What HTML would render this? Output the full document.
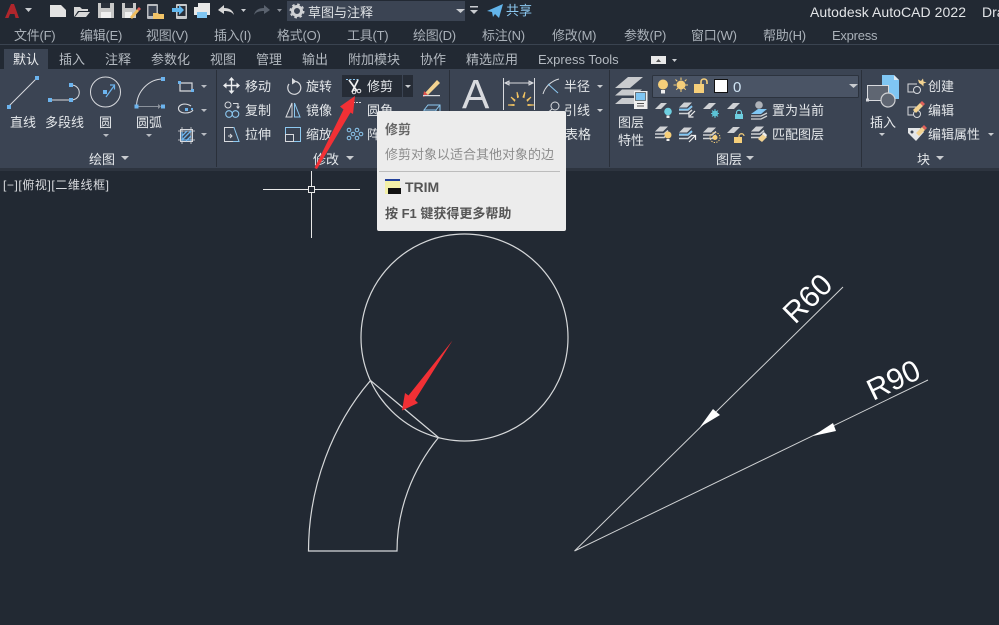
<!DOCTYPE html>
<html><head><meta charset="utf-8"><style>
html,body{margin:0;padding:0;background:#222933;width:999px;height:625px;overflow:hidden}
svg{display:block}
text{font-family:"Liberation Sans","Noto Sans CJK SC",sans-serif;font-size:13px}
.m text{fill:#aab1b9;letter-spacing:-.25px}.t text{fill:#b4bac1}.r text{fill:#e4e7ea}
</style></head><body>
<svg width="999" height="625" viewBox="0 0 999 625" xmlns="http://www.w3.org/2000/svg">
<defs>
<g id="stk" fill="none" stroke="#cfd1d4" stroke-width="1.500"><path d="M0 5.500L5 .5H13L8 5.500Z" fill="#cfd1d4" stroke="none"/><path d="M0 8h9l4-3.500M0 11.500h9l4-3.500"/></g>
</defs>
<rect width="999" height="625" fill="#222933"/>
<rect y="44" width="999" height="1" fill="#3a4350"/>
<rect y="69" width="999" height="99" fill="#3b4453"/>
<rect y="168" width="999" height="3" fill="#2d343f"/>
<rect x="4" y="49" width="44" height="20" fill="#3b4453"/>
<g fill="#2a303a"><rect x="216" y="70" width="1" height="97"/><rect x="449" y="70" width="1" height="97"/><rect x="609" y="70" width="1" height="97"/><rect x="861" y="70" width="1" height="97"/></g>

<!-- QAT -->
<path d="M5 18L11 4H14L19 18H15.500L14.500 14H10L8.500 18Z" fill="#b0262c"/>
<path d="M25 8h7l-3.500 4z" fill="#c9ccd0"/>
<path d="M50 5h11l5 5v7H50z" fill="#e3e3e3"/>
<path d="M74 7h6l2 2h6v2H78l-4 6zM79 12h11l-4 5H75z" fill="#d8d8d8"/>
<path d="M98 3h16v15H98z" fill="#c8c8c8"/><rect x="101" y="3" width="9" height="5" fill="#2a303a"/><rect x="101" y="12" width="10" height="6" fill="#f0f0f0"/>
<path d="M122 3h14v15h-14z" fill="#c8c8c8"/><rect x="125" y="3" width="8" height="5" fill="#2a303a"/><rect x="125" y="12" width="7" height="6" fill="#f0f0f0"/><path d="M130 17l7-8 2 2-7 8z" fill="#f0bd5f"/><path d="M137 9l2-2 2 2-2 2z" fill="#e0605a"/>
<rect x="147" y="4" width="11" height="15" rx="1" fill="#b9bcc0"/><rect x="148.500" y="6" width="8" height="10" fill="#3b4453"/><path d="M153 13h5l1 1h5v5h-11z" fill="#f2c468"/>
<rect x="176" y="4" width="11" height="15" rx="1" fill="#c8cacc"/><rect x="177.500" y="6" width="8" height="10" fill="#2a303a"/><path d="M172 8h7V5l5 5-5 5v-3h-7z" fill="#62b8ef"/>
<path d="M198 3h12v5h-12z" fill="#e8e8e8"/><path d="M194 7h16v8h-16z" fill="#e8e8e8"/><rect x="197" y="12" width="10" height="6" fill="#7fc6f3"/>
<path d="M218 10l6-5v3c5 0 9 2 10 7-2-3-5-4-10-4v3z" fill="#d8d8d8"/><path d="M241 9h5l-2.500 3z" fill="#c9ccd0"/>
<path d="M270 10l-6-5v3c-5 0-9 2-10 7 2-3 5-4 10-4v3z" fill="#5a626e"/><path d="M277 9h5l-2.500 3z" fill="#8b9098"/>
<rect x="287" y="1" width="178" height="20" fill="#3b4453"/>
<circle cx="297" cy="11" r="4.500" fill="none" stroke="#d0d2d5" stroke-width="3"/><circle cx="297" cy="11" r="6.500" fill="none" stroke="#d0d2d5" stroke-width="2" stroke-dasharray="2.500 2.600"/>
<text x="308" y="17" fill="#dfe2e5">草图与注释</text>
<path d="M456 9h9l-4.500 4z" fill="#c9ccd0"/>
<rect x="470" y="6" width="8" height="1.500" fill="#c9ccd0"/><path d="M470 10h8l-4 4z" fill="#c9ccd0"/>
<path d="M487 11L503 4l-4 14-4-4-2 3-1-5z" fill="#62b4ea"/>
<text x="506" y="15" fill="#8cc8f0">共享</text>
<text x="810" y="17" fill="#e2e4e7" style="font-size:14px" textLength="156">Autodesk AutoCAD 2022</text>
<text x="982" y="17" fill="#e2e4e7" style="font-size:14px">Dra</text>

<g class="m">
<text x="14" y="40">文件(F)</text><text x="80" y="40">编辑(E)</text><text x="146" y="40">视图(V)</text><text x="214" y="40">插入(I)</text><text x="277" y="40">格式(O)</text><text x="347" y="40">工具(T)</text><text x="413" y="40">绘图(D)</text><text x="482" y="40">标注(N)</text><text x="552" y="40">修改(M)</text><text x="624" y="40">参数(P)</text><text x="691" y="40">窗口(W)</text><text x="763" y="40">帮助(H)</text><text x="832" y="40">Express</text>
</g>
<g class="t">
<text x="13" y="64" style="fill:#eceef0">默认</text><text x="59" y="64">插入</text><text x="105" y="64">注释</text><text x="151" y="64">参数化</text><text x="210" y="64">视图</text><text x="256" y="64">管理</text><text x="302" y="64">输出</text><text x="348" y="64">附加模块</text><text x="420" y="64">协作</text><text x="466" y="64">精选应用</text><text x="538" y="64">Express Tools</text>
</g>
<rect x="651" y="56" width="15" height="8" fill="#e8e8e8"/><path d="M656 62h5l-2.500-3z" fill="#555"/><path d="M672 59h5l-2.500 3z" fill="#c9ccd0"/>

<!-- draw panel icons -->
<g fill="none" stroke="#d8dade" stroke-width="1">
<path d="M8 107L37 78"/>
<path d="M50 100H70M71 85c11 0 11 15 0 15"/>
<circle cx="105.500" cy="92" r="15"/>
<path d="M136.500 106C137 91 149 79 163 79"/>
<path d="M137 106.500H160" stroke="#8b929c"/>
<path d="M180 83h12v8h-12z" stroke-width="1.200"/>
<path d="M191 106c-3-2-5-2-7-2-8 1-7 9 1 9 4 0 7-1 8-3" stroke-width="1.100"/>
<rect x="180.500" y="129.500" width="12" height="12"/>
<path d="M178 131h17M178 140h17M182 127v17M191 127v17" stroke-width=".8"/>
</g>
<path d="M182 140l9-9M182 136l5-5M186 141l5-5M182 132v8h9" stroke="#6cb4ee" stroke-width="1.300" fill="none"/>
<path d="M106 97L114 86M110 85h4.500v4.500" stroke="#6cb4ee" fill="none" stroke-width="1.200"/>
<g fill="#6cb4ee"><rect x="35" y="76" width="4" height="4"/><rect x="7" y="105" width="4" height="4"/><rect x="69" y="83" width="4" height="4"/><rect x="69" y="98" width="4" height="4"/><rect x="48" y="98" width="4" height="4"/><rect x="103" y="90" width="4" height="4"/><rect x="161" y="77" width="4" height="4"/><rect x="134.500" y="104.500" width="4" height="4"/><rect x="161" y="104.500" width="4" height="4"/><rect x="178" y="81" width="3" height="3"/><rect x="191" y="89" width="3" height="3"/><rect x="185" y="108" width="3" height="3"/><rect x="191" y="108" width="2" height="2"/></g>
<path d="M158 104l3 2.500-3 2.500z" fill="#8b929c"/>
<g fill="#b8bcc2"><path d="M201 85h6l-3 3zM201 109h6l-3 3zM201 133h6l-3 3zM103 134h6l-3 3zM146 134h6l-3 3z"/></g>
<g class="r">
<text x="10" y="127">直线</text><text x="45" y="127">多段线</text><text x="99" y="127">圆</text><text x="136" y="127">圆弧</text>
<text x="89" y="164">绘图</text>
<text x="245" y="91">移动</text><text x="245" y="115">复制</text><text x="245" y="139">拉伸</text>
<text x="306" y="91">旋转</text><text x="306" y="115">镜像</text><text x="306" y="139">缩放</text>
</g>
<path d="M121 156h8l-4 4z" fill="#c9ccd0"/><path d="M346 156h8l-4 4z" fill="#c9ccd0"/><path d="M746 156h8l-4 4z" fill="#c9ccd0"/><path d="M936 156h8l-4 4z" fill="#c9ccd0"/>

<!-- modify -->
<path d="M231.500 79v13M225 85.500h13" stroke="#eceef0" stroke-width="1.400" fill="none"/><path d="M231.500 77l-3 3.500h6zM231.500 94l-3-3.500h6zM223 85.500l3.500-3v6zM240 85.500l-3.500-3v6z" fill="#eceef0"/>
<path d="M296 81.500a6.500 6.500 0 1 1-7 2.500" fill="none" stroke="#d8dade" stroke-width="1.200"/><path d="M292 78l4.500 3.500-4.500 3z" fill="#d8dade"/>
<g fill="none" stroke="#d8dade" stroke-width="1"><circle cx="228" cy="105" r="3"/><path d="M233 103.500h5v4"/></g><path d="M236 106.500l2 2.500 2-2.500z" fill="#d8dade"/><g fill="none" stroke="#8cc8f0" stroke-width="1.100"><circle cx="229" cy="114" r="3.300"/><circle cx="235.500" cy="114" r="3.300"/></g>
<path d="M292 103L286 117H292Z" fill="none" stroke="#d8dade"/><path d="M294.500 103V117H300Z" fill="none" stroke="#8cc8f0"/>
<path d="M233 127.500h-8.500v14h8.500" fill="none" stroke="#d8dade"/><path d="M233 127.500h1l5 14h-6" fill="none" stroke="#8cc8f0"/><path d="M228 136h4M230 134l2 2-2 2" stroke="#d8dade" fill="none"/>
<rect x="285.500" y="127.500" width="15" height="14" fill="none" stroke="#8cc8f0"/><rect x="285.500" y="134.500" width="8" height="7" fill="#3b4453" stroke="#d8dade"/>

<!-- trim -->
<rect x="342" y="75" width="60" height="22" fill="#262c36"/><rect x="403" y="75" width="10" height="22" fill="#262c36"/>
<path d="M346 79.500h13" stroke="#8cc8f0" stroke-dasharray="2 1.500"/>
<path d="M349 80l8 11M358 80l-6 12" stroke="#f2f2f2" stroke-width="1.700"/><circle cx="354" cy="92" r="1.800" fill="none" stroke="#eee"/><circle cx="359" cy="91" r="1.800" fill="none" stroke="#eee"/>
<text x="367" y="91" fill="#e4e7ea">修剪</text>
<text x="367" y="115" fill="#e4e7ea">圆角</text>
<text x="367" y="139" fill="#e4e7ea">阵列</text>
<path d="M405 85h6l-3 3z" fill="#c9ccd0"/>
<path d="M353 102.500h9" fill="none" stroke="#d8dade" stroke-dasharray="2 1"/>
<g fill="none" stroke="#8cc8f0"><circle cx="349" cy="130" r="1.800"/><circle cx="357" cy="130" r="1.800"/><circle cx="349" cy="138" r="1.800"/><circle cx="357" cy="138" r="1.800"/><circle cx="353" cy="134" r="1.800"/><circle cx="361" cy="134" r="1.800"/></g>
<text x="313" y="164" fill="#e4e7ea">修改</text>
<path d="M424 94l13-14 3 3-12 12z" fill="#f3d391"/><path d="M424 91l4 4-5 2z" fill="#e0514d"/><rect x="423" y="95" width="17" height="1.200" fill="#d8dade"/>
<path d="M424 110l4-5h12v9l-3 3h-13z" fill="none" stroke="#8cc8f0"/><path d="M424 110h12v7M436 110l4-5" fill="none" stroke="#8cc8f0"/>

<!-- annotation -->
<text x="462" y="108" style="font-size:41px" fill="#d8dade">A</text>
<path d="M503.500 78v32M534.500 78v32M505 83h28M505 83l4-2v4zM533 83l-4-2v4z" stroke="#d8dade" fill="none"/>
<path d="M517 92l1.500 5-1 .5zM525 92l-2 5 1 .5zM511 97l4 3-.5 1zM531 97l-4 3 .5 1zM508 105l6-.5v1zM534 105l-6-.5v1z" fill="#f3c462" stroke="#f3c462"/>
<path d="M543 94c2-7 8-13 16-15" fill="none" stroke="#d8dade"/>
<path d="M548 84l10 9" stroke="#8cc8f0"/>
<circle cx="555" cy="106" r="4" fill="none" stroke="#d8dade"/><path d="M552 109l-7 6v5" fill="none" stroke="#d8dade"/>
<text x="564" y="91" fill="#e4e7ea">半径</text><text x="564" y="115" fill="#e4e7ea">引线</text><text x="565" y="139" fill="#e4e7ea">表格</text>
<path d="M597 85h6l-3 3zM597 109h6l-3 3z" fill="#c9ccd0"/>

<!-- layers -->
<path d="M615 88l13-11h15l-13 11z" fill="#c9cbce"/>
<path d="M615 95.500l7-6h20l-3 2.500-4 3.500z" fill="#c9cbce"/>
<path d="M615 104l7-6h12v6z" fill="#c9cbce"/>
<rect x="634" y="91" width="13.500" height="18" fill="#efefef"/>
<rect x="635.500" y="92.500" width="10" height="8" fill="#7fc6f3" stroke="#333" stroke-width=".6"/><path d="M637 103.500h7M644 106h-7" stroke="#555"/>
<rect x="652.500" y="75.500" width="206" height="22" rx="1" fill="#4a5465" stroke="#2c333e"/>
<circle cx="663" cy="84.500" r="5" fill="#f6cf7a"/><rect x="661" y="90" width="4" height="3.500" fill="#eee"/>
<circle cx="681" cy="85" r="4.500" fill="#f6cf7a"/><path d="M681 77.500v15M673.500 85h15M675.500 79.500l11 11M686.500 79.500l-11 11" stroke="#f6cf7a" stroke-dasharray="2.500 6 6"/>
<rect x="694" y="84" width="10" height="9" fill="#f6cf7a"/><path d="M701 84v-2c0-4 6-4 6 0v2" fill="none" stroke="#f6cf7a" stroke-width="1.600"/>
<rect x="714.500" y="79.500" width="13" height="13" fill="#fff" stroke="#111"/>
<text x="733" y="92" fill="#cfe3f3" style="font-size:15px">0</text>
<path d="M849 84h9l-4.500 4z" fill="#c9ccd0"/>
<!-- row 1 -->
<g fill="#cfd1d4"><path d="M655 109l6-6h6l-6 6z"/><path d="M703 109l6-6h7l-6 6z"/><path d="M727 109l6-6h7l-6 6z"/></g>
<circle cx="668" cy="111.500" r="3.800" fill="#6ecfe0"/><rect x="666.500" y="115.500" width="3" height="2.500" fill="#eee"/>
<use href="#stk" x="679" y="102"/><path d="M679 109.500h9l4-3.500" stroke="#7fc6f3" stroke-width="1.800" fill="none"/>
<path d="M695 111l-5 5M689 112.500v4.500h4.500" stroke="#eee" stroke-width="1.200" fill="none"/>
<circle cx="715" cy="113.500" r="3" fill="#5cc3d6"/><path d="M715 109v9M711 113.500h8M712 110.500l6 6M718 110.500l-6 6" stroke="#5cc3d6"/>
<rect x="735" y="114" width="8" height="5" fill="#6ecfe0"/><path d="M736.500 114v-1.500c0-3 5-3 5 0v1.500" fill="none" stroke="#6ecfe0" stroke-width="1.200"/>
<circle cx="759" cy="105" r="3.800" fill="#aeb2b8"/><path d="M751 114l7-5h9l-6 5z" fill="#7fc6f3"/><path d="M751 116h10l6-3M751 119h10l6-3" stroke="#cfd1d4" fill="none" stroke-width="1.300"/>
<!-- row 2 -->
<use href="#stk" x="655" y="126"/>
<circle cx="668" cy="135" r="3.500" fill="#f6cf7a"/><rect x="666.500" y="139" width="3" height="2" fill="#eee"/>
<use href="#stk" x="679" y="127"/><path d="M679 134.500h9l4-3.500" stroke="#7fc6f3" stroke-width="1.800" fill="none"/>
<path d="M689 142l6-6M691 135.500h4.500v4.500" stroke="#eee" stroke-width="1.200" fill="none"/>
<use href="#stk" x="703" y="127"/>
<circle cx="715" cy="137.500" r="2.500" fill="#f6cf7a"/><circle cx="715" cy="137.500" r="5" fill="none" stroke="#f6cf7a" stroke-dasharray="1.300 1.300"/>
<path d="M727 133l6-6h7l-6 6z" fill="#cfd1d4"/>
<rect x="734" y="137" width="8" height="6" fill="#f6cf7a"/><path d="M739 137v-1c0-3 5-3 5 0" fill="none" stroke="#f6cf7a" stroke-width="1.200"/>
<use href="#stk" x="751" y="126"/>
<path d="M758 139l5-5 4 3-5 5z" fill="#f3d391"/><path d="M762 134l2-2 3 3-1 2z" fill="#eee"/>
<g class="r"><text x="772" y="115">置为当前</text><text x="772" y="139">匹配图层</text><text x="618" y="127">图层</text><text x="618" y="145">特性</text><text x="716" y="164">图层</text>
<text x="870" y="127">插入</text><text x="928" y="91">创建</text><text x="928" y="115">编辑</text><text x="928" y="139">编辑属性</text><text x="917" y="164">块</text></g>

<!-- block -->
<path d="M882 75h12l5 5v19h-17z" fill="#7fc6f3"/><path d="M894 75l5 5h-5z" fill="#dfe8ef"/>
<rect x="867.500" y="85.500" width="21" height="15" fill="#5f6672" stroke="#d8dade"/><circle cx="888" cy="100" r="7" fill="#5f6672" stroke="#cfd1d4" stroke-width="1.200"/><rect x="866" y="98.500" width="3" height="3" fill="#d8dade"/>
<path d="M879 133h6l-3 3z" fill="#c9ccd0"/>
<path d="M917 84h-9v8h9" fill="none" stroke="#d8dade"/><circle cx="917" cy="90" r="3.500" fill="#3b4453" stroke="#d8dade"/><path d="M919 83l-1-3.500 3 1.500 2-2.500 .5 3 3 1-3 1v3l-2-2z" fill="#f3d391"/>
<path d="M917 107h-9v8h9" fill="none" stroke="#d8dade"/><circle cx="917" cy="114" r="3.500" fill="#3b4453" stroke="#d8dade"/><path d="M913 110l7-7 3 3-7 7z" fill="#f3d391"/><path d="M920 103l2-2 3 3-2 2z" fill="#e0605a"/>
<path d="M908 128h12l4 4-8 9-8-8z" fill="#e4e6e8"/><circle cx="912" cy="132" r="1.500" fill="#3b4453"/><path d="M916 133l6-6 3 3-6 6z" fill="#f3d391"/><path d="M922 127l2-2 3 3-2 2z" fill="#e0605a"/>
<path d="M988 133h6l-3 3z" fill="#c9ccd0"/>

<!-- viewport label -->
<text x="3" y="189" fill="#d8dade" style="font-size:12px" textLength="106">[−][俯视][二维线框]</text>

<!-- crosshair -->
<g stroke="#e8e8e8" stroke-width="1" fill="none"><path d="M263 189.500H308M315 189.500H360M311.500 171V186M311.500 193V238"/><rect x="308.500" y="186.500" width="6" height="6"/></g>

<!-- drawing -->
<g fill="none" stroke="#d6d8da" stroke-width="1.200">
<circle cx="464.500" cy="337.500" r="103.500"/>
<path d="M370.500 380.500C333 424 308.500 486 308.500 551H397C397 510 412 470 438.500 437.500Z"/>
</g>
<g stroke="#d0d2d4" stroke-width="1" fill="none"><path d="M574.500 551L843 287M574.500 551L928 380"/></g>
<path d="M700 427L713 409L720 415Z" fill="#fff"/><path d="M813 436L833 423L836 431Z" fill="#fff"/>
<text transform="translate(795 325) rotate(-44.500)" style="font-size:30px" fill="#fff">R60</text>
<text transform="translate(873 401) rotate(-25.500)" style="font-size:30px" fill="#fff">R90</text>

<!-- tooltip -->
<rect x="377" y="111" width="189" height="120" rx="2" fill="#ececec"/>
<text x="385" y="134" fill="#666" font-weight="bold">修剪</text>
<text x="385" y="159" fill="#8c8c8c">修剪对象以适合其他对象的边</text>
<rect x="379" y="171" width="181" height="1" fill="#bcbcbc"/>
<rect x="385" y="179" width="15" height="15" fill="#f3f0a8"/><rect x="385" y="179" width="15" height="2" fill="#22409a"/><rect x="388" y="188" width="13" height="6" fill="#111"/>
<text x="405" y="192" fill="#555" font-weight="bold" style="font-size:14px">TRIM</text>
<text x="385" y="218" fill="#555" font-weight="bold" style="font-size:13px">按 F1 键获得更多帮助</text>

<!-- red arrows -->
<path d="M452.500 340.500L415 400L418 403L402 410.500L405 393L408.500 395.500Z" fill="#f23035"/>
<path d="M355 96L353 114L350.500 112.500L317 169L314.500 168L343.500 109.500L340 106.500Z" fill="#f23035"/>
</svg>
</body></html>
